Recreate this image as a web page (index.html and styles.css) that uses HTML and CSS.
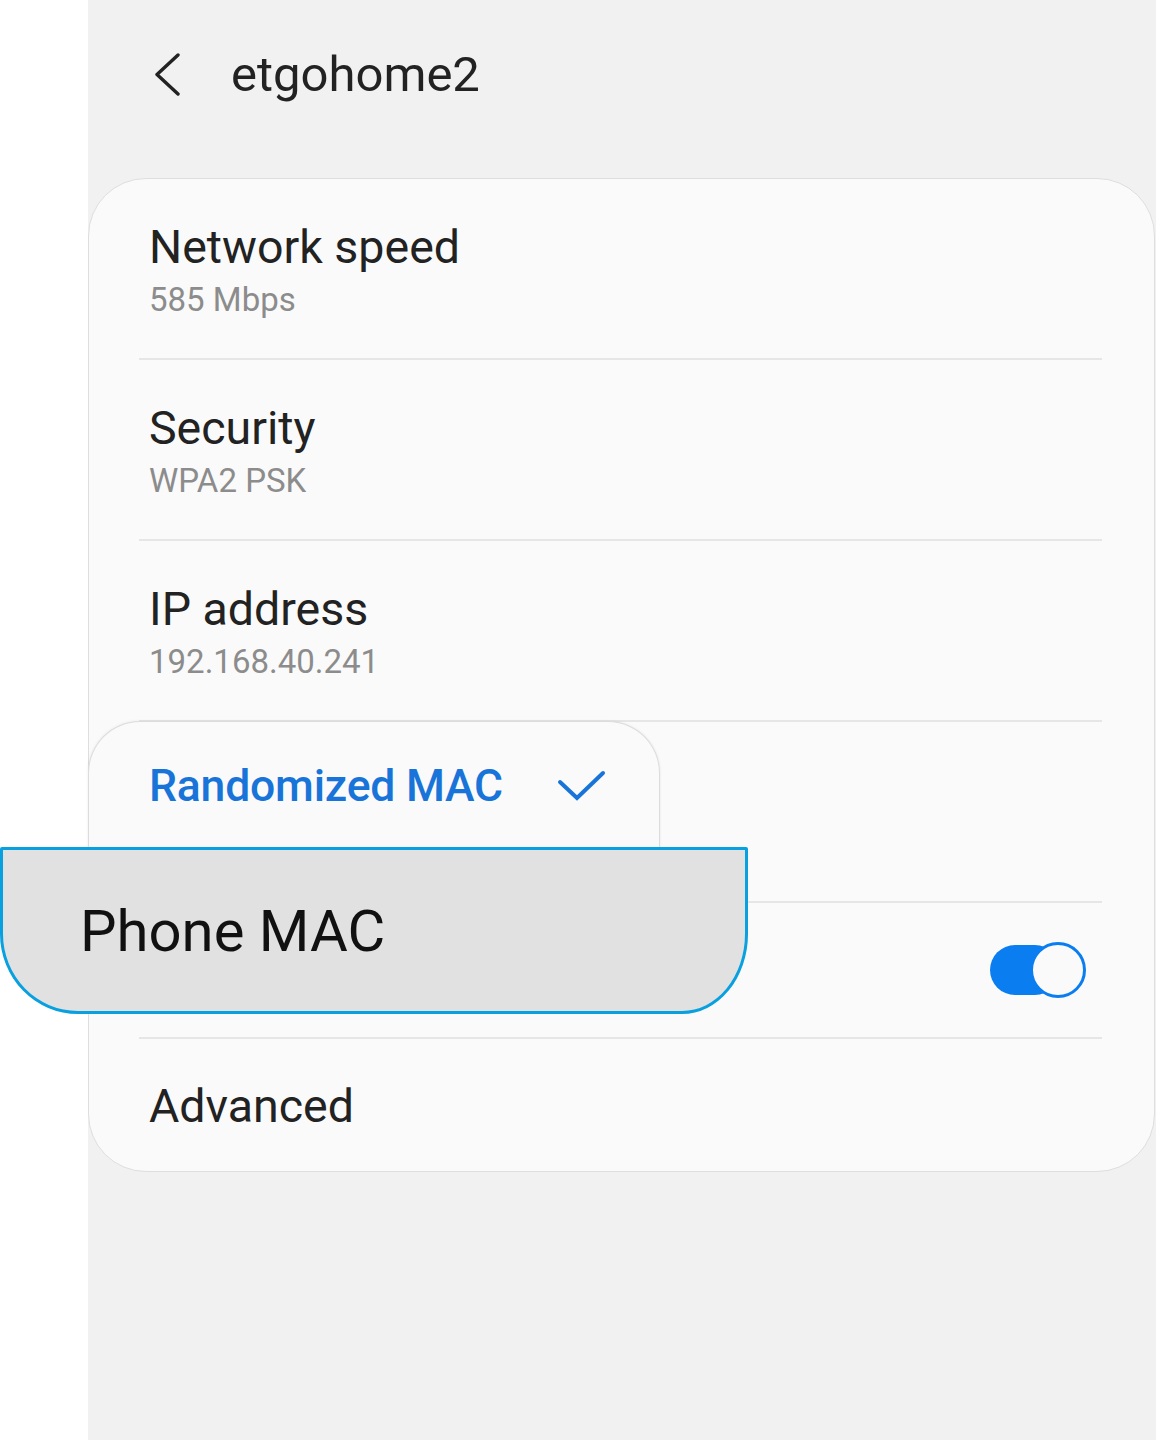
FILE: index.html
```html
<!DOCTYPE html>
<html lang="en">
<head>
<meta charset="utf-8">
<title>etgohome2</title>
<link rel="stylesheet" href="styles.css">
</head>
<body>
<div class="page">
  <div class="strip"></div>
  <main class="main">
    <header class="header">
      <svg class="back" width="32" height="44" viewBox="0 0 32 44" aria-hidden="true">
        <polyline points="26,2 5,21.5 26,41" fill="none" stroke="#222" stroke-width="3.4" stroke-linecap="round" stroke-linejoin="round"/>
      </svg>
      <h1 class="title">etgohome2</h1>
    </header>
    <section class="card">
      <div class="row">
        <div class="row-title">Network speed</div>
        <div class="row-sub">585 Mbps</div>
      </div>
      <div class="divider"></div>
      <div class="row">
        <div class="row-title">Security</div>
        <div class="row-sub">WPA2 PSK</div>
      </div>
      <div class="divider"></div>
      <div class="row">
        <div class="row-title">IP address</div>
        <div class="row-sub">192.168.40.241</div>
      </div>
      <div class="divider"></div>
      <div class="row row-mac"></div>
      <div class="divider"></div>
      <div class="row row-toggle">
        <div class="toggle">
          <span class="track"></span>
          <span class="thumb"></span>
        </div>
      </div>
      <div class="divider"></div>
      <div class="row row-adv">
        <div class="row-title">Advanced</div>
      </div>
    </section>
  </main>

  <div class="popup">
    <span class="popup-text">Randomized MAC</span>
    <svg class="check" width="52" height="36" viewBox="0 0 52 36" aria-hidden="true">
      <polyline points="4,12 21,28 47,3" fill="none" stroke="#1874d8" stroke-width="4" stroke-linecap="round" stroke-linejoin="miter"/>
    </svg>
  </div>
  <div class="option">
    <span class="option-text">Phone MAC</span>
  </div>
</div>
</body>
</html>
```

FILE: styles.css
```css
* { box-sizing: border-box; }

html, body {
  margin: 0;
  padding: 0;
  background: #ffffff;
}

body {
  font-family: Roboto, "Noto Sans", "Liberation Sans", sans-serif;
  color: #222222;
}

.page {
  position: relative;
  display: flex;
  width: 1156px;
  min-height: 1440px;
}

.strip {
  width: 88px;
  flex: 0 0 88px;
  background: #ffffff;
}

.main {
  flex: 1;
  background: #f1f1f1;
  min-height: 1440px;
}

.header {
  display: flex;
  align-items: center;
  height: 178px;
  padding: 0 0 28px 64px;
}

.back {
  display: block;
  flex: 0 0 auto;
}

.title {
  margin: 0 0 0 47px;
  font-size: 49px;
  line-height: 56px;
  font-weight: 400;
  color: #222222;
}

.card {
  margin-right: 1px;
  background: #fafafa;
  border: 1px solid #dedede;
  border-radius: 58px;
  overflow: hidden;
}

.row {
  height: 179px;
  padding: 41px 60px 0 60px;
}

.row-title {
  font-size: 46.5px;
  line-height: 54px;
  color: #222222;
}

.row-sub {
  font-size: 33px;
  line-height: 52px;
  color: #8c8c8c;
}

.row-toggle {
  height: 134px;
  padding-top: 0;
  padding-right: 68px;
  display: flex;
  align-items: center;
  justify-content: flex-end;
}

.row-adv {
  height: 132px;
  padding-top: 2px;
  display: flex;
  align-items: center;
}

.divider {
  height: 2px;
  margin: 0 52px 0 50px;
  background: #e6e6e6;
}

.toggle {
  display: flex;
  align-items: center;
}

.track {
  display: block;
  width: 70px;
  height: 50px;
  border-radius: 25px;
  background: #0a7ef0;
}

.thumb {
  display: block;
  width: 56px;
  height: 56px;
  margin-left: -30px;
  border-radius: 50%;
  background: #fafafa;
  border: 3px solid #0a7ef0;
}

.popup {
  position: absolute;
  left: 88px;
  top: 721px;
  width: 572px;
  height: 140px;
  padding: 36px 0 0 60px;
  display: flex;
  align-items: flex-start;
  background: #fafafa;
  border: 1px solid #dcdcdc;
  border-bottom: none;
  border-radius: 52px 52px 0 0;
  box-shadow: 0 0 3px rgba(0, 0, 0, 0.08);
  z-index: 2;
}

.popup-text {
  font-size: 44.5px;
  line-height: 56px;
  font-weight: 500;
  color: #1874d8;
  letter-spacing: -0.2px;
}

.check {
  display: block;
  margin: 12px 0 0 53px;
}

.option {
  position: absolute;
  left: 0;
  top: 847px;
  width: 748px;
  height: 167px;
  display: flex;
  align-items: center;
  padding-left: 77px;
  background: #e1e1e1;
  border: 3px solid #08a0df;
  border-radius: 2px 2px 66px 78px / 2px 2px 80px 80px;
  z-index: 3;
}

.option-text {
  font-size: 58px;
  line-height: 68px;
  color: #111111;
}
```
